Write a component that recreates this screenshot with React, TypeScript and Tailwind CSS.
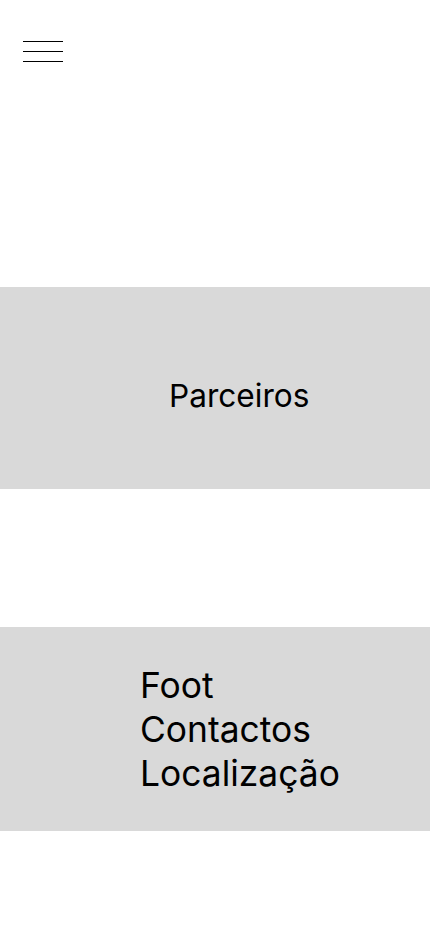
export default function App() {
  return (
    <div className="w-[430px] min-h-[932px] bg-white" style={{ fontFamily: "Inter, 'Noto Sans', sans-serif" }}>
      <header className="h-[287px] pt-[41px] pl-[23px]">
        <div className="flex flex-col gap-[9px] w-[40px]">
          <div className="h-px bg-black" />
          <div className="h-px bg-black" />
          <div className="h-px bg-black" />
        </div>
      </header>
      <section className="h-[202px] bg-[#d9d9d9] pt-[93px] pl-[169px]">
        <span className="block text-[31.6px] leading-[32px] text-black">Parceiros</span>
      </section>
      <div className="h-[138px]" />
      <footer className="h-[204px] bg-[#d9d9d9] flex flex-col justify-center pt-[2px] pl-[140px] text-[35.4px] leading-[44px] text-black">
        <span>Foot</span>
        <span>Contactos</span>
        <span>Localização</span>
      </footer>
    </div>
  );
}
